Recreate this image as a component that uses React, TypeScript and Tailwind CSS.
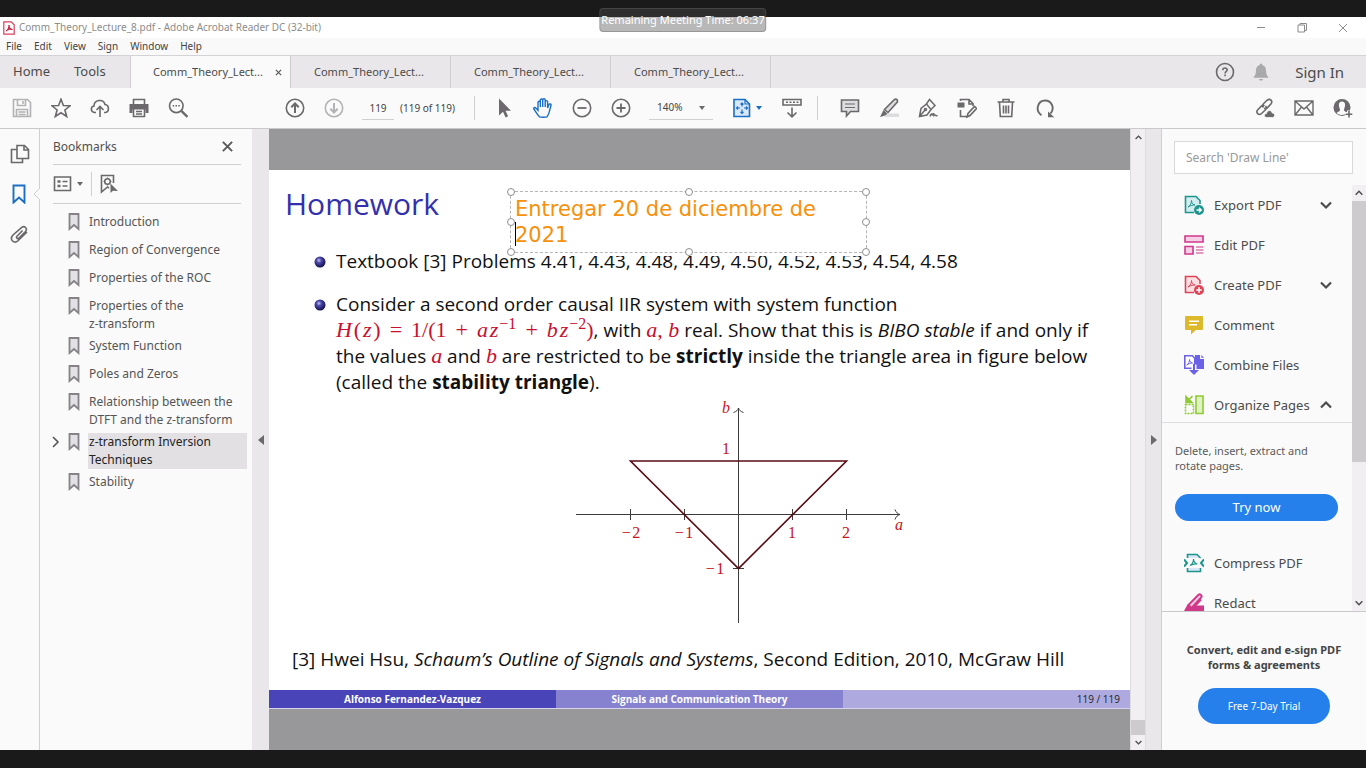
import React from "react";

type IconProps = { children: React.ReactNode; className?: string };

function Icon({ children, className = "text-[#6b696b]" }: IconProps) {
  return (
    <svg
      viewBox="0 0 20 20"
      width="20"
      height="20"
      aria-hidden="true"
      className={`shrink-0 ${className}`}
      fill="none"
      stroke="currentColor"
      strokeWidth="1.6"
    >
      {children}
    </svg>
  );
}

function ToolButton({ label, children, className }: { label: string; children: React.ReactNode; className?: string }) {
  return (
    <button type="button" aria-label={label} className="flex h-10 w-[39px] shrink-0 items-center justify-center">
      <Icon className={className}>{children}</Icon>
    </button>
  );
}

function Caret({ className = "text-[#6b696b]" }: { className?: string }) {
  return (
    <svg viewBox="0 0 6 4" width="6" height="4" aria-hidden="true" className={`shrink-0 ${className}`}>
      <path d="M0 0h6L3 4z" fill="currentColor" />
    </svg>
  );
}

function Chevron({ up = false, size = 12 }: { up?: boolean; size?: number }) {
  return (
    <svg viewBox="0 0 12 12" width={size} height={size} aria-hidden="true" className="shrink-0 text-[#4b4b4b]" fill="none" stroke="currentColor" strokeWidth="2.2">
      <path d={up ? "M1 8.5 6 3.5l5 5" : "M1 3.5 6 8.5l5-5"} />
    </svg>
  );
}

function TitleBar() {
  return (
    <header className="flex h-[21px] items-center bg-white">
      <svg viewBox="0 0 12 14" width="12" height="14" aria-hidden="true" className="ml-[3px]">
        <path d="M.8.8h7.4l3 3v9.4H.8z" fill="#fff" stroke="#d9415a" strokeWidth="1.2" />
        <path d="M3 10c2-1 3-4 3-6 0 3 1.500 4 3.500 4.500C7.500 8 5 8.500 3 10z" fill="#c7203c" stroke="#c7203c" strokeWidth=".9" />
      </svg>
      <h1 className="ml-1 text-[10px] text-[#8c8c8c]">Comm_Theory_Lecture_8.pdf - Adobe Acrobat Reader DC (32-bit)</h1>
      <div className="ml-auto flex items-center pr-[3px]">
        {[
          ["Minimize", "M6 9.500h8"],
          ["Restore", "M6 7h6.500v7H6zM8 7V5.500h6.500v7H12.500"],
          ["Close", "M6 6l8 8M14 6l-8 8"],
        ].map(([label, d]) => (
          <button key={label} type="button" aria-label={label} className="flex h-5 w-[41px] items-center justify-center">
            <svg viewBox="0 0 20 20" width="20" height="20" fill="none" stroke="#8c8c8c" strokeWidth="1">
              <path d={d} />
            </svg>
          </button>
        ))}
      </div>
    </header>
  );
}

function MenuBar() {
  return (
    <nav aria-label="Menu" className="flex h-[17px] items-center gap-3 bg-[#f9f9f9] pl-[6px] text-[10px] text-[#444]">
      {["File", "Edit", "View", "Sign", "Window", "Help"].map((m) => (
        <button key={m} type="button">{m}</button>
      ))}
    </nav>
  );
}

function TabBar() {
  return (
    <div className="flex h-[33px] border-t border-[#d3d2d4] bg-[#e9e7ea] text-[#4b4b4b]">
      <div className="flex w-[130px] shrink-0 items-center gap-6 pl-[13px] text-[13px]">
        <button type="button">Home</button>
        <button type="button">Tools</button>
      </div>
      {[0, 1, 2, 3].map((i) => (
        <div
          key={i}
          className={
            i === 0
              ? "flex w-[161px] items-center border-x border-[#cfced0] bg-[#fafafa] pl-[22px]"
              : "flex w-[160px] items-center border-r border-[#cfced0] pl-[23px]"
          }
        >
          <button type="button" className="text-[11px]">Comm_Theory_Lect...</button>
          {i === 0 && (
            <button type="button" aria-label="Close tab" className="ml-auto mr-2">
              <svg viewBox="0 0 8 8" width="7" height="7" stroke="#555" strokeWidth="1.300">
                <path d="M1 1l6 6M7 1L1 7" />
              </svg>
            </button>
          )}
        </div>
      ))}
      <div className="ml-auto flex items-center pr-[22px]">
        <button type="button" aria-label="Help" className="mr-4">
          <Icon>
            <circle cx="10" cy="10" r="8.500" />
            <path d="M7.800 8.200c0-3 4.600-2.800 4.400-.2-.1 1.400-2.100 1.500-2.100 3.400M10.100 12.600v1.700" />
          </Icon>
        </button>
        <button type="button" aria-label="Notifications" className="mr-6">
          <Icon className="text-[#a9a8aa]">
            <path d="M10 1.500c.9 0 1.200.8 1.300 1.400 3 .8 3.700 3.400 3.800 6.600.1 3 .9 4 2.200 5.500v.8H2.700V15c1.300-1.500 2.100-2.500 2.200-5.500.1-3.200.8-5.800 3.800-6.600.1-.6.4-1.400 1.300-1.400zM8 17h4c-.3 2.300-3.700 2.300-4 0z" fill="currentColor" stroke="none" />
          </Icon>
        </button>
        <button type="button" className="text-[15px]">Sign In</button>
      </div>
    </div>
  );
}

function Toolbar() {
  return (
    <div className="flex h-[41px] items-center border-b border-[#c9c8ca] bg-[#fafafa] pl-[2px] text-[10px] text-[#444]">
      <ToolButton label="Save" className="text-[#b3b2b4]">
        <path d="M1.500 1.500h14l3 3v14h-17zM5.500 1.500v6h8v-6M4.500 18.500v-7h11v7M11 3v3M6.500 14h7M6.500 16.500h7" />
      </ToolButton>
      <ToolButton label="Add to starred">
        <path d="M10 1.200l2.400 6.300 6.700.3-5.200 4.200 1.800 6.500L10 14.800l-5.700 3.700L6.100 12 .9 7.800l6.700-.3z" />
      </ToolButton>
      <ToolButton label="Upload">
        <path d="M6 14.500H4.500C.4 14 .4 8.500 4 8 4 1.500 13.500.5 15 6.500c4.500.5 4.500 7.500.3 8H14M10 19V9M6.500 12L10 8.500l3.500 3.500" />
      </ToolButton>
      <ToolButton label="Print">
        <path d="M4.500 6V1.500h11V6" />
        <path d="M.5 6h19v9h-3v-3.500h-13V15h-3z" fill="currentColor" stroke="none" />
        <path d="M4.500 11v7.500h11V11M7 13.500h6M7 16h6" />
      </ToolButton>
      <ToolButton label="Find">
        <circle cx="8.300" cy="7.800" r="6.800" />
        <path d="M13.300 12.800l6.200 6.200" strokeWidth="2.400" />
        <path d="M4.700 7.800h1.500M7.500 7.800h1.500M10.300 7.800h1.500" />
      </ToolButton>

      <div className="ml-[78px] flex items-center">
        <ToolButton label="Previous page">
          <circle cx="10" cy="10" r="8.700" />
          <path d="M10 15V6M6.300 9.300L10 5.500l3.700 3.800" strokeWidth="2" />
        </ToolButton>
        <ToolButton label="Next page" className="text-[#b3b2b4]">
          <circle cx="10" cy="10" r="8.700" />
          <path d="M10 5v9M6.300 10.700l3.700 3.800 3.700-3.800" strokeWidth="2" />
        </ToolButton>
        <input aria-label="Page number" defaultValue="119" className="ml-[9px] h-6 w-8 border-b border-[#d0cfd1] text-center" />
        <span className="ml-[6px] w-[58px] whitespace-nowrap">(119 of 119)</span>
      </div>

      <div className="ml-4 mr-[9px] h-6 w-px bg-[#d0cfd1]" />
      <ToolButton label="Select">
        <path d="M5 .5v17l4-3.700 2.600 5.700 2.500-1.200-2.600-5.500H17z" fill="currentColor" stroke="none" />
      </ToolButton>
      <ToolButton label="Hand tool" className="text-[#1b6fc4]">
        <path d="M6.500 18.800C4 16.500 2.500 13.500.9 11c-.6-1.400 1-2.100 1.900-1l2.200 2.200V4.500c0-1.600 2.200-1.600 2.300 0V9 2.200c0-1.700 2.400-1.700 2.400 0V9 2c0-1.700 2.500-1.700 2.500 0v7-5.200c0-1.600 2.400-1.600 2.400 0V10l1.200-3.200c.6-1.500 2.600-.9 2.200.7L16.500 13c-.4 2.500-1.300 4-2.500 5.800-1 .5-6.500.5-7.500 0z" strokeWidth="1.400" />
      </ToolButton>
      <ToolButton label="Zoom out">
        <circle cx="10" cy="10" r="8.700" />
        <path d="M5.500 10h9" strokeWidth="1.800" />
      </ToolButton>
      <ToolButton label="Zoom in">
        <circle cx="10" cy="10" r="8.700" />
        <path d="M5.500 10h9M10 5.500v9" strokeWidth="1.800" />
      </ToolButton>
      <div className="relative ml-[9px] w-16">
        <select aria-label="Zoom level" defaultValue="140%" className="h-6 w-full appearance-none border-b border-[#d0cfd1] pl-2">
          <option>100%</option>
          <option>140%</option>
        </select>
        <span className="pointer-events-none absolute right-2 top-[10px]"><Caret /></span>
      </div>
      <button type="button" aria-label="Fit page" className="ml-[19px] flex w-[30px] items-center gap-1">
        <Icon className="text-[#1b6fc4]">
          <path d="M2 1.500h11l4.500 4.500v12.500H2z" fill="#d9e8f8" />
          <path d="M13 1.500V6h4.500M10 5v3.500M10 11.500v4M4.500 10h3.500M12 10h3.500M8.500 6.500L10 5l1.500 1.500M8.500 14L10 15.500l1.500-1.500M6 8.500L4.500 10 6 11.500M14 8.500l1.500 1.500-1.500 1.500" strokeWidth="1.200" />
        </Icon>
        <Caret className="text-[#1b6fc4]" />
      </button>
      <div className="ml-[10px]">
        <ToolButton label="Show toolbar below">
          <path d="M1 1.500h18v5.500H1zM4 4.200h2M7.500 4.200h2M11 4.200h2M14.500 4.200h2M10 9.500v9M5.500 14.500l4.500 4.300 4.500-4.300" />
        </ToolButton>
      </div>
      <div className="ml-[6px] mr-[12px] h-6 w-px bg-[#d0cfd1]" />
      <ToolButton label="Comment">
        <path d="M1.500 2h17v11.500h-8l-4 4.500v-4.500h-5z" fill="#dddcde" />
        <path d="M5 6h10M5 9.500h10" strokeWidth="1.200" />
      </ToolButton>
      <ToolButton label="Highlight">
        <path d="M8 15.500h12v3.500H5z" fill="#dddcde" stroke="none" />
        <path d="M5.500 11.500L15.500 1.500c2-1 3.500.5 2.800 2.500L9 14.500z" fill="#dddcde" />
        <path d="M4.500 12l4 3.800L6 17.500 1 19l2-4z" fill="currentColor" stroke="none" />
      </ToolButton>
      <ToolButton label="Sign">
        <path d="M1.500 18.500L3 10.500 8.500 6l4.500 5.500-4 5.500zM1.500 18.500L7 12M8 6.500L11.500 1.500l5.500 6-4 4" strokeWidth="1.500" />
        <circle cx="7.500" cy="11.500" r="1" />
        <path d="M12 18.500c1-3 2-3.500 2-1 1-2 2-3 2-.3 1-1.200 1 1.200 3.500.3" strokeWidth="1.500" />
      </ToolButton>
      <ToolButton label="Edit page">
        <path d="M.5 4.500h7v5h-7z" fill="currentColor" stroke="none" />
        <path d="M3.500 3V1.500h8.500l4 4V8M12 1.500V6h4M3.500 12v6.500h6M10 19l1-3.500 6.500-7 2 2-6.500 7z" strokeWidth="1.600" />
      </ToolButton>
      <ToolButton label="Delete">
        <path d="M1.500 4h17M7 4V1.500h6V4M3.500 4.500l.8 14h11.400l.8-14M7.500 7.500v8M10 7.500v8M12.500 7.500v8" />
      </ToolButton>
      <ToolButton label="Rotate">
        <path d="M6.500 17.300C-.5 12 3 2.500 10 2.500s10 8 5.500 13" strokeWidth="1.900" />
        <path d="M13 13.500v5.800h6.200z" fill="currentColor" stroke="none" />
      </ToolButton>

      <div className="ml-auto flex pr-1">
        <ToolButton label="Copy link">
          <path d="M8.500 9.500C7 8 7.500 6.800 8.500 5.700L12 2.300c3-2.500 6.300.8 3.800 3.800l-3.500 3.700c-1 .8-2 .9-3 .2M10.500 8c1.500 1.500 1 2.700 0 3.700L6.600 15.500c-2.900 2.500-6.300-.9-3.800-3.800l3.500-3.600c1-.9 2.200-1 3.200-.2" />
          <path d="M11.500 19.500c-3-.4-2.500-4 0-4 .8-4 5-3.600 5.600-.6 3.500.3 3.200 4.300.6 4.600z" fill="currentColor" stroke="#fafafa" strokeWidth=".8" />
        </ToolButton>
        <ToolButton label="Email">
          <path d="M1 3h18v14H1zM1.500 3.500L10 11l8.500-7.500M1.500 16.500l6-7.500M18.500 16.500l-6-7.500" strokeWidth="1.400" />
        </ToolButton>
        <ToolButton label="Share">
          <circle cx="9" cy="9.500" r="8.500" fill="currentColor" stroke="none" />
          <path d="M9 3.500c-3.800 0-3.600 4.500-2.100 7.500v1.800L3.500 15c1.500 2 7 3 11 0l-3.400-2.200V11c1.500-3 1.700-7.500-2.100-7.500z" fill="#fafafa" stroke="none" />
          <path d="M16 12.500v7M12.500 16h7" stroke="#fafafa" strokeWidth="4" />
          <path d="M16 13v6.500M12.800 16.200h6.500" strokeWidth="1.600" />
        </ToolButton>
      </div>
    </div>
  );
}

const bookmarks = [
  "Introduction",
  "Region of Convergence",
  "Properties of the ROC",
  "Properties of the\nz-transform",
  "System Function",
  "Poles and Zeros",
  "Relationship between the\nDTFT and the z-transform",
  "z-transform Inversion\nTechniques",
  "Stability",
];

function BookmarkPanel() {
  return (
    <>
      <nav aria-label="Navigation panes" className="flex w-10 shrink-0 flex-col items-center gap-5 border-r border-[#cfced0] bg-[#fafafa] pt-[15px]">
        <button type="button" aria-label="Pages">
          <Icon>
            <path d="M7 1.500h7.500l4 4v9H7zM14 1.500V6h4.500M6.500 5.500h-5v13h11V15" />
          </Icon>
        </button>
        <button type="button" aria-label="Bookmarks" className="relative">
          <Icon className="text-[#1b6fc4]">
            <path d="M3.500 1.500h11v17l-5.500-5-5.500 5z" strokeWidth="1.900" />
          </Icon>
          <svg viewBox="0 0 7 12" width="7" height="12" aria-hidden="true" className="absolute -right-[10px] top-1">
            <path d="M7 0L1 6l6 6" fill="#fafafa" stroke="#cfced0" />
          </svg>
        </button>
        <button type="button" aria-label="Attachments">
          <Icon>
            <path d="M12.500 6.500l-5.500 5.800c-1.300 1.500.7 3.200 2 1.800l6.500-6.500c2.500-3.200-1-6.500-4-4L3 11c-4 4.500 1 9.500 5.300 5.500L17 8" />
          </Icon>
        </button>
      </nav>
      <aside aria-label="Bookmarks" className="flex w-[212px] shrink-0 flex-col bg-[#fafafa]">
        <div className="ml-[13px] mr-[11px] flex h-9 items-center justify-between border-b border-[#cfced0] pr-2">
          <h2 className="text-[12px] text-[#505050]">Bookmarks</h2>
          <button type="button" aria-label="Close bookmarks" className="block">
            <svg viewBox="0 0 10 10" width="11" height="11" stroke="#5b5b5b" strokeWidth="1.800">
              <path d="M.8.8l8.400 8.400M9.200.8L.8 9.200" />
            </svg>
          </button>
        </div>
        <div className="ml-[13px] mr-[11px] flex h-[39px] items-center border-b border-[#cfced0]">
          <button type="button" aria-label="Options" className="flex items-center gap-1">
            <Icon>
              <path d="M1.500 3h16v13.500h-16z" />
              <path d="M4.500 7.500h3M4.500 12h3" strokeWidth="2.400" />
              <path d="M9.500 7.500h5M9.500 12h5" />
            </Icon>
            <Caret />
          </button>
          <span className="ml-2 mr-[7px] h-6 w-px bg-[#cfced0]" />
          <button type="button" aria-label="Find bookmark">
            <Icon>
              <path d="M14.500 9V1.500h-12V18l6-5 1.500 1.200" />
              <circle cx="8.500" cy="7.500" r="2.800" />
              <path d="M8.500 3.500v1.500M8.500 10v1.500M4.500 7.500H6M11 7.500h1.500" strokeWidth="1.200" />
              <path d="M11.500 9.500V19l2.500-2.200 5 .2z" fill="currentColor" stroke="none" />
            </Icon>
          </button>
        </div>
        <ul className="pt-[9px] text-[12px] leading-[18px] text-[#555]">
          {bookmarks.map((b) => {
            const active = b.startsWith("z-");
            return (
              <li key={b} className={b.includes("\n") ? "flex h-10 pb-1 pr-[5px]" : "flex h-7 pb-1 pr-[5px]"}>
                <span className="flex w-7 shrink-0 items-center self-start pl-3 pt-[3px]">
                  {active && (
                    <svg viewBox="0 0 8 12" width="8" height="12" fill="none" stroke="#555" strokeWidth="1.600">
                      <path d="M1 1l5 5-5 5" />
                    </svg>
                  )}
                </span>
                <svg viewBox="0 0 12 18" width="12" height="18" aria-hidden="true" className="mr-2 shrink-0">
                  <path d="M1.500 1h9v15L6 12l-4.500 4z" fill="#e3e1e5" stroke="#858386" strokeWidth="1.800" />
                </svg>
                <a
                  href="#slide"
                  className={active ? "grow whitespace-pre bg-[#e2e0e3] pl-px text-[#222]" : "grow whitespace-pre pl-px"}
                >
                  {b}
                </a>
              </li>
            );
          })}
        </ul>
      </aside>
    </>
  );
}

function Splitter({ direction }: { direction: "left" | "right" }) {
  return (
    <div
      className={
        direction === "left"
          ? "flex w-[17px] shrink-0 items-center justify-center bg-[#e9e7ea]"
          : "flex w-4 shrink-0 items-center justify-center border-r border-[#cfced0] bg-[#e9e7ea]"
      }
    >
      <button type="button" aria-label={`Toggle ${direction} panel`}>
        <svg viewBox="0 0 6 10" width="6" height="10">
          <path d={direction === "left" ? "M6 0v10L0 5z" : "M0 0v10l6-5z"} fill="#6b696b" />
        </svg>
      </button>
    </div>
  );
}

function M({ children }: { children: React.ReactNode }) {
  return <span className="font-['Liberation_Serif',serif] text-[22px] leading-none text-[#c8102e]">{children}</span>;
}

function Op({ children }: { children: React.ReactNode }) {
  return <span className="mx-[9px]">{children}</span>;
}

function Exp({ children }: { children: React.ReactNode }) {
  return <sup className="ml-px text-[16px] leading-none">{children}</sup>;
}

function Bullet() {
  return (
    <svg viewBox="0 0 12 12" width="12" height="12" aria-hidden="true" className="mt-[8px] shrink-0">
      <defs>
        <radialGradient id="ball" cx=".4" cy=".35" r=".65">
          <stop offset="0" stopColor="#c4c4f0" />
          <stop offset=".35" stopColor="#4a48a8" />
          <stop offset="1" stopColor="#12104a" />
        </radialGradient>
      </defs>
      <circle cx="6" cy="6" r="5.500" fill="url(#ball)" />
    </svg>
  );
}

function StabilityTriangle() {
  return (
    <svg viewBox="560 396 360 234" width="360" height="234" role="img" aria-label="Stability triangle">
      <g fill="none" stroke="#3c3c3c" strokeWidth="1">
        <path d="M576 514.500h324M738.500 623V408M895 509.500c1 3 3 4.500 5 5-2 .5-4 2-5 5M733.500 412.500c3-1 4.500-2.500 5-4.500.5 2 2 3.500 5 4.500M630.500 509v11M684.500 509v11M792.500 509v11M846.500 509v11M733 568.500h11" />
      </g>
      <path d="M630.500 461h216l-108 107.500z" fill="none" stroke="#5c0a14" strokeWidth="1.600" />
      <g fill="#c4161c" fontSize="16" textAnchor="middle" fontFamily="'Liberation Serif', serif">
        <text x="726" y="413" fontStyle="italic">b</text>
        <text x="899" y="530" fontStyle="italic">a</text>
        <text x="726" y="454">1</text>
        <text x="631" y="538">−{"\u200a"}2</text>
        <text x="684" y="538">−{"\u200a"}1</text>
        <text x="792" y="538">1</text>
        <text x="846" y="538">2</text>
        <text x="715" y="574">−{"\u200a"}1</text>
      </g>
    </svg>
  );
}

function Annotation() {
  const handles = [
    "-left-1 -top-1",
    "left-1/2 -ml-1 -top-1",
    "-right-1 -top-1",
    "-left-1 top-1/2 -mt-1",
    "-right-1 top-1/2 -mt-1",
    "-left-1 -bottom-1",
    "left-1/2 -ml-1 -bottom-1",
    "-right-1 -bottom-1",
  ];
  return (
    <div className="absolute left-[241px] top-[21px] h-[65px] w-[357px] bg-white font-['DejaVu_Sans',sans-serif]">
      <div className="relative h-[62px] border border-dashed border-[#b5b5b5]">
        <textarea
          aria-label="Text annotation"
          defaultValue="Entregar 20 de diciembre de 2021"
          className="block h-[60px] w-full resize-none overflow-hidden pl-1 pt-1 text-[21px] leading-[26px] text-[#f7900a]"
        />
        <span className="absolute left-1 top-[30px] h-6 w-px bg-black" />
        {handles.map((h) => (
          <span key={h} className={`absolute size-2 rounded-full border border-[#8f8f8f] bg-white ${h}`} />
        ))}
      </div>
    </div>
  );
}

function Slide() {
  return (
    <article id="slide" className="relative flex flex-col bg-white font-['Open_Sans','Noto_Sans',sans-serif] text-[19px] leading-[26px] text-[#111]">
      <h2 className="pl-4 pt-3 text-[30px] leading-[44px] text-[#3430ad]">Homework</h2>
      <ul className="mt-[22px] flex flex-col gap-[17px] pl-[45px]">
        <li className="flex gap-[10px]">
          <Bullet />
          <p>Textbook [3] Problems 4.41, 4.43, 4.48, 4.49, 4.50, 4.52, 4.53, 4.54, 4.58</p>
        </li>
        <li className="flex gap-[10px]">
          <Bullet />
          <p className="whitespace-nowrap">
            Consider a second order causal IIR system with system function
            <br />
            <M>
              <i>H</i>{"\u200a"}({"\u200a"}<i>z</i>{"\u200a"})<Op>=</Op>1/(1<Op>+</Op><i>a{"\u200a"}z</i><Exp>−1</Exp><Op>+</Op><i>b{"\u200a"}z</i><Exp>−2</Exp>)
            </M>
            , with <M><i>a</i>, <i>b</i></M> real. Show that this is <em>BIBO stable</em> if and only if
            <br />
            the values <M><i>a</i></M> and <M><i>b</i></M> are restricted to be <strong>strictly</strong> inside the triangle area in figure below
            <br />
            (called the <strong>stability triangle</strong>).
          </p>
        </li>
      </ul>
      <div className="flex justify-center pl-20 pt-px">
        <StabilityTriangle />
      </div>
      <p className="mt-4 pl-[23px]">
        [3] Hwei Hsu, <em>Schaum’s Outline of Signals and Systems</em>, Second Edition, 2010, McGraw Hill
      </p>
      <footer className="mt-[18px] grid h-[19px] grid-cols-3 border-b border-[#d5d3ee] text-center text-[10px] leading-[18px] text-white">
        <strong className="bg-[#4944b8]">Alfonso Fernandez-Vazquez</strong>
        <strong className="bg-[#8682d0]">Signals and Communication Theory</strong>
        <span className="bg-[#aeaae0] pr-[10px] text-right text-[#222]">119 / 119</span>
      </footer>
      <Annotation />
    </article>
  );
}

function DocumentView() {
  return (
    <>
      <main className="flex min-w-0 grow flex-col overflow-hidden bg-[#98979a] pt-[41px]">
        <Slide />
      </main>
      <div className="flex w-4 shrink-0 flex-col items-center border-x border-[#dddcde] bg-[#f1eff2]">
        <button type="button" aria-label="Scroll up" className="flex h-4 items-center"><Chevron up size={7} /></button>
        <span className="mt-auto h-[15px] w-full bg-[#cdcbce]" />
        <button type="button" aria-label="Scroll down" className="flex h-[15px] items-center"><Chevron size={7} /></button>
      </div>
    </>
  );
}

type Tool = { name: string; icon: React.ReactNode; chevron?: "up" | "down" };

const tools: Tool[] = [
  {
    name: "Export PDF",
    chevron: "down",
    icon: (
      <Icon className="text-[#1d958c]">
        <path d="M10 17.500H1.500v-16h10.500l4 4V9" fill="#d3ecf0" />
        <path d="M4 12c2.500-1.500 3.500-4 3.500-6.500.2 3 1.500 4 3.500 4.500-2 0-4.500.5-7 2z" strokeWidth="1" />
        <circle cx="15" cy="15" r="5" fill="currentColor" stroke="none" />
        <path d="M12.500 15h4.500M15 12.800l2.300 2.200-2.300 2.200" stroke="#fff" strokeWidth="1.400" />
      </Icon>
    ),
  },
  {
    name: "Edit PDF",
    icon: (
      <Icon className="text-[#d0388a]">
        <path d="M1 1h18v6H1zM1 11.500h8v7.500H1z" fill="#f5cfe6" />
        <path d="M12 12h7.500M12 15h7.500M12 18h7.500" strokeWidth="1" />
      </Icon>
    ),
  },
  {
    name: "Create PDF",
    chevron: "down",
    icon: (
      <Icon className="text-[#de4457]">
        <path d="M10 17.500H1.500v-16h10.500l4 4V9" fill="#fbdfe2" />
        <path d="M4 12c2.500-1.500 3.500-4 3.500-6.500.2 3 1.500 4 3.500 4.500-2 0-4.500.5-7 2z" strokeWidth="1" />
        <circle cx="15" cy="15" r="5" fill="currentColor" stroke="none" />
        <path d="M12.300 15h5.400M15 12.300v5.400" stroke="#fff" strokeWidth="1.500" />
      </Icon>
    ),
  },
  {
    name: "Comment",
    icon: (
      <Icon className="text-[#dcb92a]">
        <path d="M2 1h16q1 0 1 1v12q0 1-1 1h-6l-5 4.500V15H2q-1 0-1-1V2q0-1 1-1z" fill="currentColor" stroke="none" />
        <path d="M5 6.300h10M5 9.800h8" stroke="#fff" strokeWidth="1.400" />
      </Icon>
    ),
  },
  {
    name: "Combine Files",
    icon: (
      <Icon className="text-[#6b62e8]">
        <path d="M11 0h5v4h4v10h-9z" fill="currentColor" stroke="none" />
        <path d="M17.300 0v2.800H20z" fill="currentColor" stroke="none" />
        <path d="M.8.800h7.500l2.500 2.500v10H.8z" fill="#fff" />
        <path d="M2.800 10C5 8.800 5.500 6 5.500 4.500c.2 2 1 3 3 3.500-2 0-4 .8-5.700 2z" strokeWidth="1" />
        <path d="M10 9.500v7" stroke="#fafafa" strokeWidth="5" />
        <path d="M10 9v7" strokeWidth="2" />
        <path d="M5 15h10l-5 5z" fill="currentColor" stroke="none" />
      </Icon>
    ),
  },
  {
    name: "Organize Pages",
    chevron: "up",
    icon: (
      <Icon className="text-[#8fca35]">
        <path d="M12 1h7v17.500h-7z" fill="#dff2c4" />
        <path d="M1.500 9.500h8v9h-8z" strokeDasharray="2 1" />
        <path d="M2 1.500v6h6zM4 5.500l4.500-4.300" fill="currentColor" />
      </Icon>
    ),
  },
];

const moreTools: Tool[] = [
  {
    name: "Compress PDF",
    icon: (
      <Icon className="text-[#1d958c]">
        <path d="M3.500 5V1.500h9.500l3.500 3.500M3.500 15v3.500h13V15" fill="#d9e6f5" />
        <path d="M6 12.500c2.500-1.500 3.500-4 3.500-6.500.2 3 1.500 4.500 4 5-2.500-.5-5 0-7.500 1.500z" strokeWidth="1.200" />
        <path d="M0 6.500L3 10 0 13.500M20 6.500L17 10l3 3.500" strokeWidth="2" />
      </Icon>
    ),
  },
  {
    name: "Redact",
    icon: (
      <Icon className="text-[#d0388a]">
        <path d="M4.500 12L14.500 1.800c1.500-1.200 4 .8 2.700 2.700L7.500 15z" fill="#f5cfe6" strokeWidth="2" />
        <path d="M0 18l3.500-6.500 5 4.500L11 12.500h9V20H0z" fill="currentColor" stroke="none" />
        <path d="M8 16L17 6.500" strokeWidth="2" />
      </Icon>
    ),
  },
];

function ToolRow({ tool }: { tool: Tool }) {
  return (
    <button type="button" className="flex h-[34px] w-full items-center pl-[22px] pr-5 text-[13px] text-[#4b4b4b]">
      {tool.icon}
      <span className="ml-[10px] leading-none">{tool.name}</span>
      {tool.chevron && <span className="ml-auto"><Chevron up={tool.chevron === "up"} /></span>}
    </button>
  );
}

function ToolsPanel() {
  return (
    <aside aria-label="Tools" className="flex w-[204px] shrink-0 flex-col bg-[#fafafa]">
      <div className="pb-[11px] pl-3 pr-[13px] pt-3">
        <input
          type="search"
          aria-label="Search tools"
          placeholder="Search 'Draw Line'"
          className="block h-[33px] w-full border border-[#d9d8da] bg-white px-[11px] text-[12px] text-[#505050] placeholder:text-[#999]"
        />
      </div>
      <div className="flex min-h-0 grow basis-0 border-b border-[#c9c8ca]">
        <div className="min-w-0 grow overflow-hidden pt-[3px]">
          <div className="flex flex-col gap-[6px] border-b border-[#dcdbdd]">
            {tools.map((t) => <ToolRow key={t.name} tool={t} />)}
          </div>
          <div className="pb-[25px] pl-[13px] pr-[14px] pt-5">
            <p className="text-[11px] leading-[15px] text-[#5a5a5a]">Delete, insert, extract and<br />rotate pages.</p>
            <button type="button" className="mt-[21px] block h-[27px] w-full rounded-full bg-[#2680eb] text-[13px] text-white">Try now</button>
          </div>
          <div className="flex flex-col gap-[6px]">
            {moreTools.map((t) => <ToolRow key={t.name} tool={t} />)}
          </div>
        </div>
        <div className="flex w-[14px] shrink-0 flex-col items-center bg-[#f1eff2]">
          <button type="button" aria-label="Scroll tools up" className="flex h-4 items-center"><Chevron up size={8} /></button>
          <span className="h-[261px] w-full bg-[#cdcbce]" />
          <button type="button" aria-label="Scroll tools down" className="mt-auto flex h-4 items-center"><Chevron size={8} /></button>
        </div>
      </div>
      <div className="flex flex-col items-center pb-[26px] pt-[30px]">
        <p className="text-center text-[11px] font-bold leading-[15px] text-[#444]">Convert, edit and e-sign PDF<br />forms &amp; agreements</p>
        <button type="button" className="mt-4 h-9 rounded-full bg-[#2680eb] px-[30px] text-[10px] text-white">Free 7-Day Trial</button>
      </div>
    </aside>
  );
}

export default function App() {
  return (
    <div className="relative flex h-screen flex-col bg-[#1a1a1a] pb-[18px] pt-[17px] font-['Noto_Sans','Open_Sans',sans-serif]">
      <TitleBar />
      <MenuBar />
      <TabBar />
      <Toolbar />
      <div className="flex min-h-0 grow">
        <BookmarkPanel />
        <Splitter direction="left" />
        <DocumentView />
        <Splitter direction="right" />
        <ToolsPanel />
      </div>
      <div className="absolute left-1/2 top-2 flex h-6 -translate-x-1/2 items-center whitespace-nowrap rounded border border-[#66666666] bg-[#4d4d4d66] px-px text-[11px] text-white">
        Remaining Meeting Time: 06:37
      </div>
    </div>
  );
}
